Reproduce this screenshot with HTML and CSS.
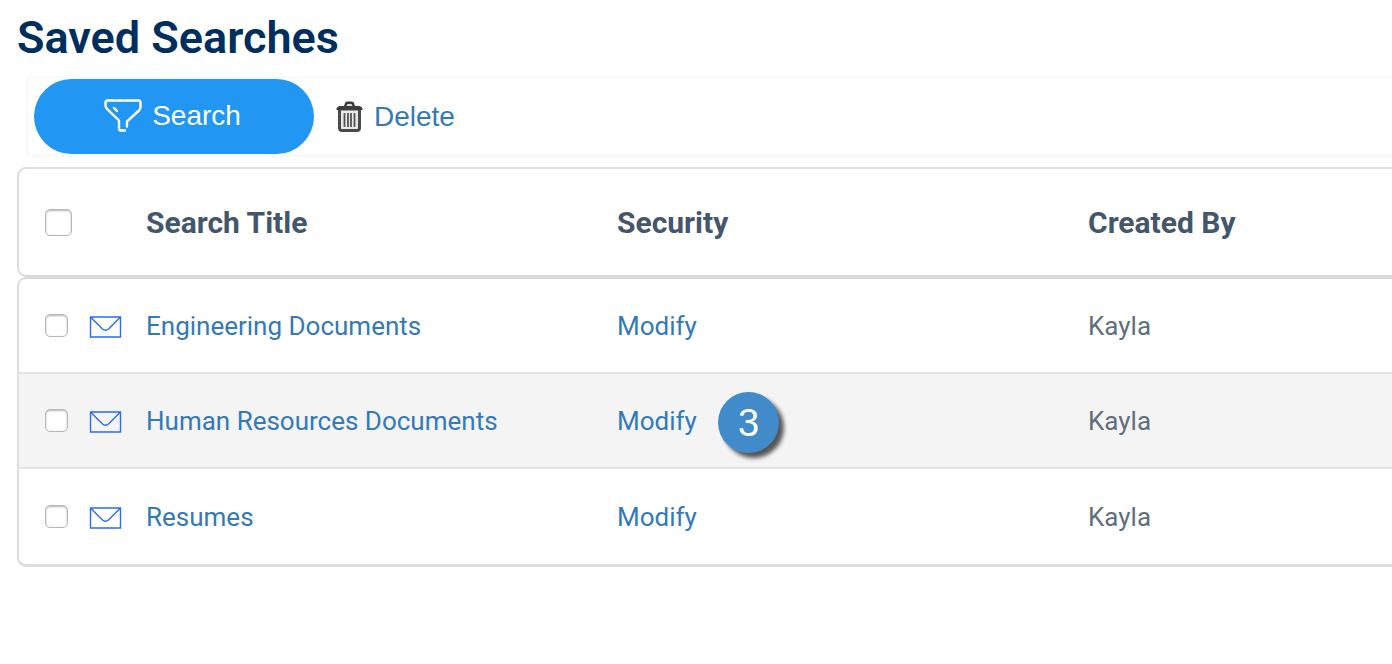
FILE: index.html
```html
<!DOCTYPE html>
<html lang="en">
<head>
    <meta charset="UTF-8">
    <meta name="viewport" content="width=device-width, initial-scale=1.0">
    <title>Saved Searches</title>
    <link rel="stylesheet" href="styles.css">
</head>
<body>
    <h1>Saved Searches</h1>

    <div class="toolbar">
        <button type="button" class="btn-search">
            <svg class="icon-filter" viewBox="0 0 38 33" aria-hidden="true">
                <path d="M23 27.500V22.500L35 11.500Q36.500 10 36.500 8V3.500Q36.500 1.500 34.500 1.500H3.500Q1.500 1.500 1.500 3.500V6.500Q1.500 8.500 3 9.800L15 21.500V29.500Q15 31.500 17 31.500H21"/>
                <path d="M10 9L13 12"/>
            </svg>
            Search
        </button>
        <a href="#" class="btn-delete">
            <svg class="icon-trash" viewBox="0 0 27 31" aria-hidden="true">
                <path class="can" d="M3.500 8V27Q3.500 29.500 6 29.500H21Q23.500 29.500 23.500 27V8Z"/>
                <path class="lid" d="M0.500 9V7.500Q1 5.500 3.500 5H8L9 2Q9.500 0.500 11 0.500H16Q17.500 0.500 18 2L19 5H23.500Q26 5.500 26.500 7.500V9Z"/>
                <path class="handle" d="M10.500 5L11.500 3H15.500L16.500 5Z"/>
                <path class="bars" d="M8.500 12V26M12 12V26M15 12V26M18.500 12V26"/>
            </svg>
            Delete
        </a>
    </div>

    <table class="searches">
        <colgroup>
            <col class="col-check">
            <col class="col-mail">
            <col class="col-title">
            <col class="col-title">
            <col>
        </colgroup>
        <thead>
            <tr>
                <th class="check"><input type="checkbox" aria-label="Select all"></th>
                <th></th>
                <th>Search Title</th>
                <th>Security</th>
                <th>Created By</th>
            </tr>
        </thead>
        <tbody>
            <tr>
                <td class="check"><input type="checkbox" aria-label="Engineering Documents"></td>
                <td class="mail">
                    <svg class="icon-mail" viewBox="0 0 32 22" aria-hidden="true"><path d="M1 1H31V21H1ZM1 1L13 13Q16 15.500 19 13L31 1"/></svg>
                </td>
                <td><a href="#">Engineering Documents</a></td>
                <td><a href="#">Modify</a></td>
                <td>Kayla</td>
            </tr>
            <tr class="alt">
                <td class="check"><input type="checkbox" aria-label="Human Resources Documents"></td>
                <td class="mail">
                    <svg class="icon-mail" viewBox="0 0 32 22" aria-hidden="true"><path d="M1 1H31V21H1ZM1 1L13 13Q16 15.500 19 13L31 1"/></svg>
                </td>
                <td><a href="#">Human Resources Documents</a></td>
                <td class="marked"><a href="#">Modify</a><span class="step">3</span></td>
                <td>Kayla</td>
            </tr>
            <tr>
                <td class="check"><input type="checkbox" aria-label="Resumes"></td>
                <td class="mail">
                    <svg class="icon-mail" viewBox="0 0 32 22" aria-hidden="true"><path d="M1 1H31V21H1ZM1 1L13 13Q16 15.500 19 13L31 1"/></svg>
                </td>
                <td><a href="#">Resumes</a></td>
                <td><a href="#">Modify</a></td>
                <td>Kayla</td>
            </tr>
        </tbody>
    </table>
</body>
</html>
```

FILE: styles.css
```css
* {
    box-sizing: border-box;
}

body {
    font-family: Roboto, Arial, sans-serif;
    font-size: 26px;
    margin: 0;
    padding: 8px 0 0 17px;
    background-color: #fff;
    color: #5f6f7f;
}

h1 {
    margin: 0;
    font-size: 45px;
    line-height: 60px;
    font-weight: 600;
    color: #002f5d;
}

a {
    color: #337ab7;
    text-decoration: none;
}

/* Toolbar */
.toolbar {
    display: flex;
    align-items: center;
    gap: 22px;
    margin: 8px 0 10px 9px;
    padding-left: 5px;
    border: 3px solid #fafafa;
    border-right: none;
    font-family: "Liberation Sans", Arial, sans-serif;
    font-size: 28px;
}

.btn-search {
    display: flex;
    align-items: center;
    justify-content: center;
    gap: 10px;
    width: 280px;
    height: 75px;
    margin: 0;
    padding: 0 3px 2px 0;
    border: none;
    border-radius: 38px;
    background-color: #2196f3;
    color: #fff;
    font: inherit;
    cursor: pointer;
}

.btn-delete {
    display: flex;
    align-items: center;
    gap: 11px;
}

.icon-filter {
    width: 38px;
    height: 33px;
    fill: none;
    stroke: #fff;
    stroke-width: 2.4;
    stroke-linecap: round;
    stroke-linejoin: round;
}

.icon-trash {
    width: 27px;
    height: 31px;
}

.icon-trash .can {
    fill: #e8e8e8;
    stroke: #4a4a4a;
    stroke-width: 3;
}

.icon-trash .lid {
    fill: #3c3c3c;
}

.icon-trash .handle {
    fill: #ddd;
}

.icon-trash .bars {
    stroke: #555;
    stroke-width: 1.8;
}

/* Table */
.searches {
    width: 100%;
    table-layout: fixed;
    border-collapse: separate;
    border-spacing: 0;
}

.col-check {
    width: 58px;
}

.col-mail {
    width: 56px;
}

.col-title {
    width: 471px;
}

th,
td {
    height: 95px;
    padding: 0 15px;
    border-bottom: 2px solid #e4e4e4;
    text-align: left;
    vertical-align: middle;
}

th {
    height: 110px;
    border-top: 2px solid #ddd;
    border-bottom-color: #dadada;
    font-size: 30px;
    font-weight: 700;
    color: #44566c;
}

tbody tr:first-child td {
    height: 97px;
    border-top: 2px solid #dadada;
}

tbody tr:last-child td {
    height: 98px;
    border-bottom: 3px solid #ddd;
}

.check {
    padding: 0 0 0 26px;
    border-left: 2px solid #ddd;
}

th.check {
    border-radius: 9px 0 0 9px;
}

tbody tr:first-child .check {
    border-top-left-radius: 9px;
}

tbody tr:last-child .check {
    border-bottom-left-radius: 9px;
}

.alt td {
    background-color: #f4f4f4;
}

.check input {
    appearance: none;
    display: block;
    width: 23px;
    height: 23px;
    margin: 0;
    border: 1px solid #b8b8b8;
    border-radius: 5px;
    background-color: #fff;
    box-shadow: inset 0 1px 2px rgba(0, 0, 0, 0.3);
}

.check input:checked {
    background-color: #2196f3;
}

th.check input {
    width: 27px;
    height: 27px;
}

.mail {
    padding: 3px 0 0 14px;
}

.icon-mail {
    display: block;
    width: 33px;
    height: 22px;
    fill: none;
    stroke: #2b6bf3;
    stroke-width: 1.4;
}

/* Numbered marker next to a link */
.marked {
    position: relative;
}

.step {
    position: absolute;
    top: 18px;
    left: 116px;
    width: 61px;
    height: 61px;
    border-radius: 50%;
    background-color: #428bca;
    box-shadow: 5px 5px 4px rgba(0, 0, 0, 0.65);
    color: #fff;
    font-family: "Liberation Sans", Arial, sans-serif;
    font-size: 38px;
    line-height: 62px;
    text-align: center;
}
```
